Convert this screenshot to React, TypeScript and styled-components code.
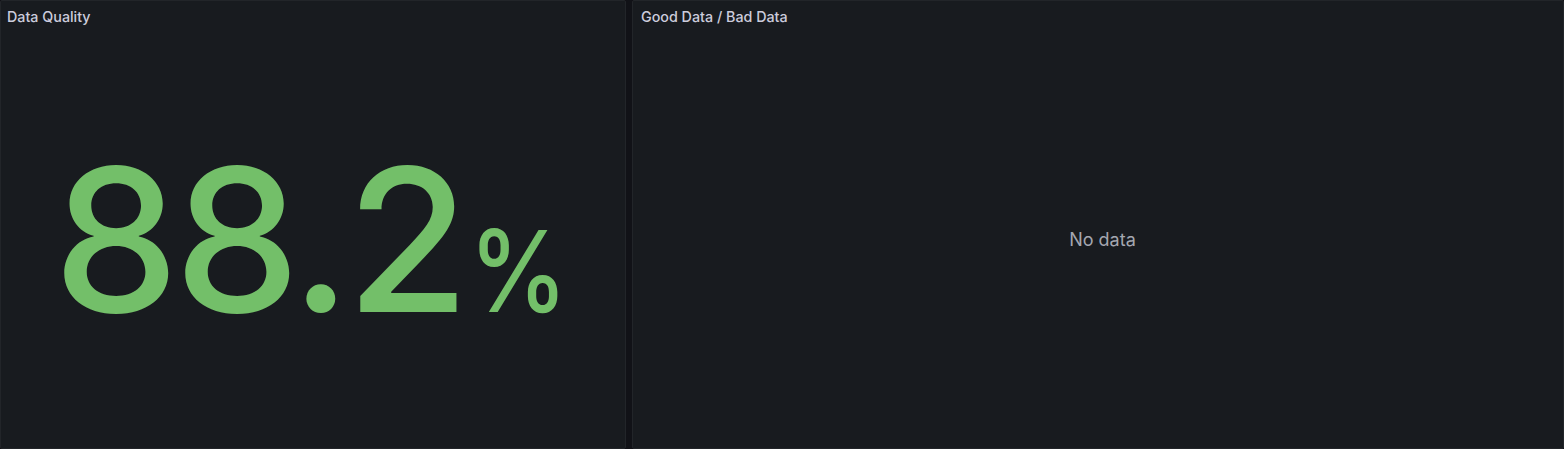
import React from "react";
import styled, { createGlobalStyle } from "styled-components";

const Global = createGlobalStyle`
  html, body { margin: 0; padding: 0; background: #111217; }
  body { font-family: Inter, "Noto Sans", sans-serif; }
  #root { height: 449px; }
`;

const Board = styled.div`
  display: grid;
  grid-template-columns: 626px 1fr;
  gap: 6px;
  height: 449px;
  width: 1564px;
  box-sizing: border-box;
`;

const Panel = styled.section`
  display: flex;
  flex-direction: column;
  background: #181b1f;
  border: 1px solid #222529;
  border-radius: 2px;
  box-sizing: border-box;
  min-width: 0;
  overflow: hidden;
`;

const Header = styled.header<{ $inset: number }>`
  height: 32px;
  display: flex;
  align-items: center;
  padding: 0 ${(p) => p.$inset}px;
  flex: none;
`;

const Title = styled.h2`
  margin: 0;
  font-size: 14.3px;
  font-weight: 500;
  color: #ccccdc;
  line-height: 1;
  margin-top: 1px;
`;

const Body = styled.div`
  flex: 1;
  display: flex;
  align-items: center;
  justify-content: center;
  min-height: 0;
`;

const StatValue = styled.div`
  display: flex;
  align-items: baseline;
  color: #73bf69;
  font-family: Inter, sans-serif;
  font-weight: 500;
  line-height: 1;
  margin-top: -4px;
  margin-left: 0px;
`;

const Number = styled.span`
  font-size: 200px;
  letter-spacing: -5px;
  margin-left: 2px;
`;

const Unit = styled.span`
  font-size: 113px;
  margin-left: 4px;
  letter-spacing: -6px;
  transform: scaleX(0.88);
  transform-origin: left center;
`;

const Empty = styled.div`
  font-size: 18px;
  color: #a4a7b0;
  margin-top: -2px;
  margin-left: 9px;
`;

export default function App() {
  return (
    <>
      <Global />
      <Board>
        <Panel>
          <Header $inset={6}>
            <Title>Data Quality</Title>
          </Header>
          <Body>
            <StatValue>
              <Number>88.2</Number>
              <Unit>%</Unit>
            </StatValue>
          </Body>
        </Panel>
        <Panel>
          <Header $inset={8}>
            <Title>Good Data / Bad Data</Title>
          </Header>
          <Body>
            <Empty>No data</Empty>
          </Body>
        </Panel>
      </Board>
    </>
  );
}
